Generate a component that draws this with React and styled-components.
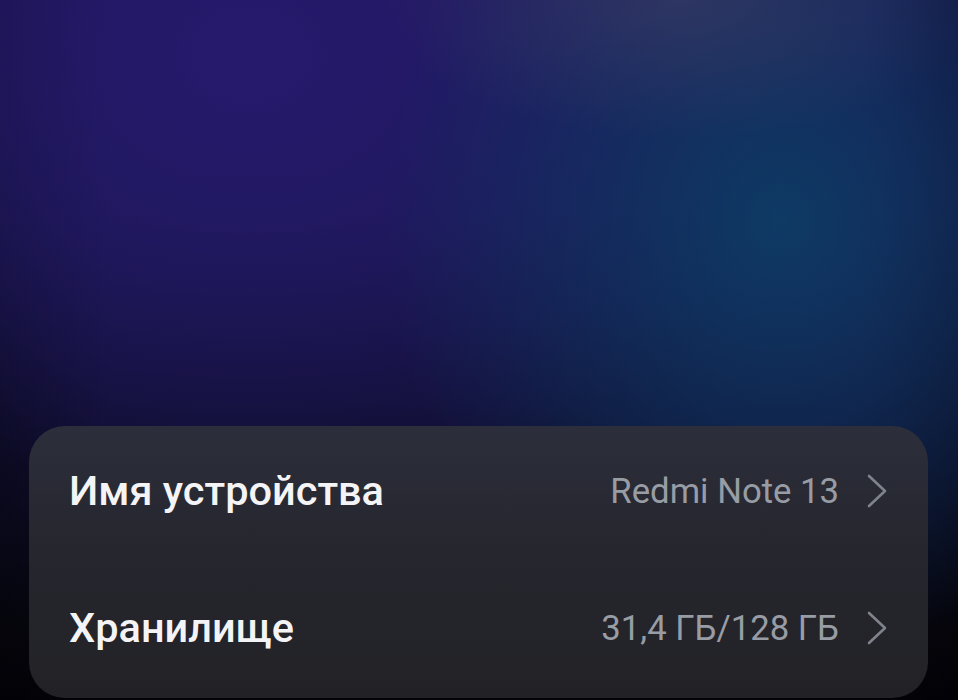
import React from 'react';
import styled, { createGlobalStyle } from 'styled-components';

const GlobalStyle = createGlobalStyle`
  html, body {
    margin: 0;
    padding: 0;
    background: #07060f;
  }
  #root {
    height: 700px;
  }
`;

const Screen = styled.div`
  width: 958px;
  height: 700px;
  overflow: hidden;
  display: flex;
  flex-direction: column;
  justify-content: flex-end;
  font-family: Roboto, "Noto Sans", sans-serif;
  background:
    radial-gradient(ellipse 300px 140px at 680px 0px, rgba(64, 66, 100, 0.55), rgba(64, 66, 100, 0) 100%),
    radial-gradient(ellipse 400px 440px at 780px 220px, rgba(14, 58, 100, 1), rgba(14, 58, 100, 0) 100%),
    radial-gradient(ellipse 560px 440px at 250px 60px, rgba(38, 26, 110, 0.95), rgba(38, 26, 110, 0) 100%),
    linear-gradient(90deg, rgba(0, 0, 0, 0.25) 0%, rgba(0, 0, 0, 0) 12%, rgba(0, 0, 0, 0) 90%, rgba(0, 0, 0, 0.3) 100%),
    linear-gradient(180deg, #1d1658 0%, #1a1650 30%, #110f34 60%, #06060e 90%, #030308 100%);
`;

const Card = styled.div`
  margin: 0 30px 2px 29px;
  height: 272px;
  border-radius: 36px;
  display: flex;
  flex-direction: column;
  gap: 8px;
  background: linear-gradient(180deg, #2c2e3b 0%, #26272f 40%, #222226 100%);
`;

const Row = styled.div`
  height: 129px;
  display: flex;
  align-items: center;
  padding: 0 40px 0 40px;
`;

const Title = styled.span`
  flex: 1;
  color: #f4f4f6;
  font-size: 41.5px;
  font-weight: 500;
`;

const Value = styled.span`
  color: #989ca5;
  font-size: 34.7px;
  font-weight: 400;
  margin-right: 27px;
`;

const Chevron = () => (
  <svg width="22" height="34" viewBox="0 0 22 34" fill="none">
    <path d="M3 2 L19 17 L3 32" stroke="#7f838b" strokeWidth="2.6" strokeLinecap="round" strokeLinejoin="round" />
  </svg>
);

const items = [
  { title: 'Имя устройства', value: 'Redmi Note 13' },
  { title: 'Хранилище', value: '31,4 ГБ/128 ГБ' },
];

const App = () => (
  <Screen>
    <GlobalStyle />
    <Card>
      {items.map((it) => (
        <Row key={it.title}>
          <Title>{it.title}</Title>
          <Value>{it.value}</Value>
          <Chevron />
        </Row>
      ))}
    </Card>
  </Screen>
);

export default App;
